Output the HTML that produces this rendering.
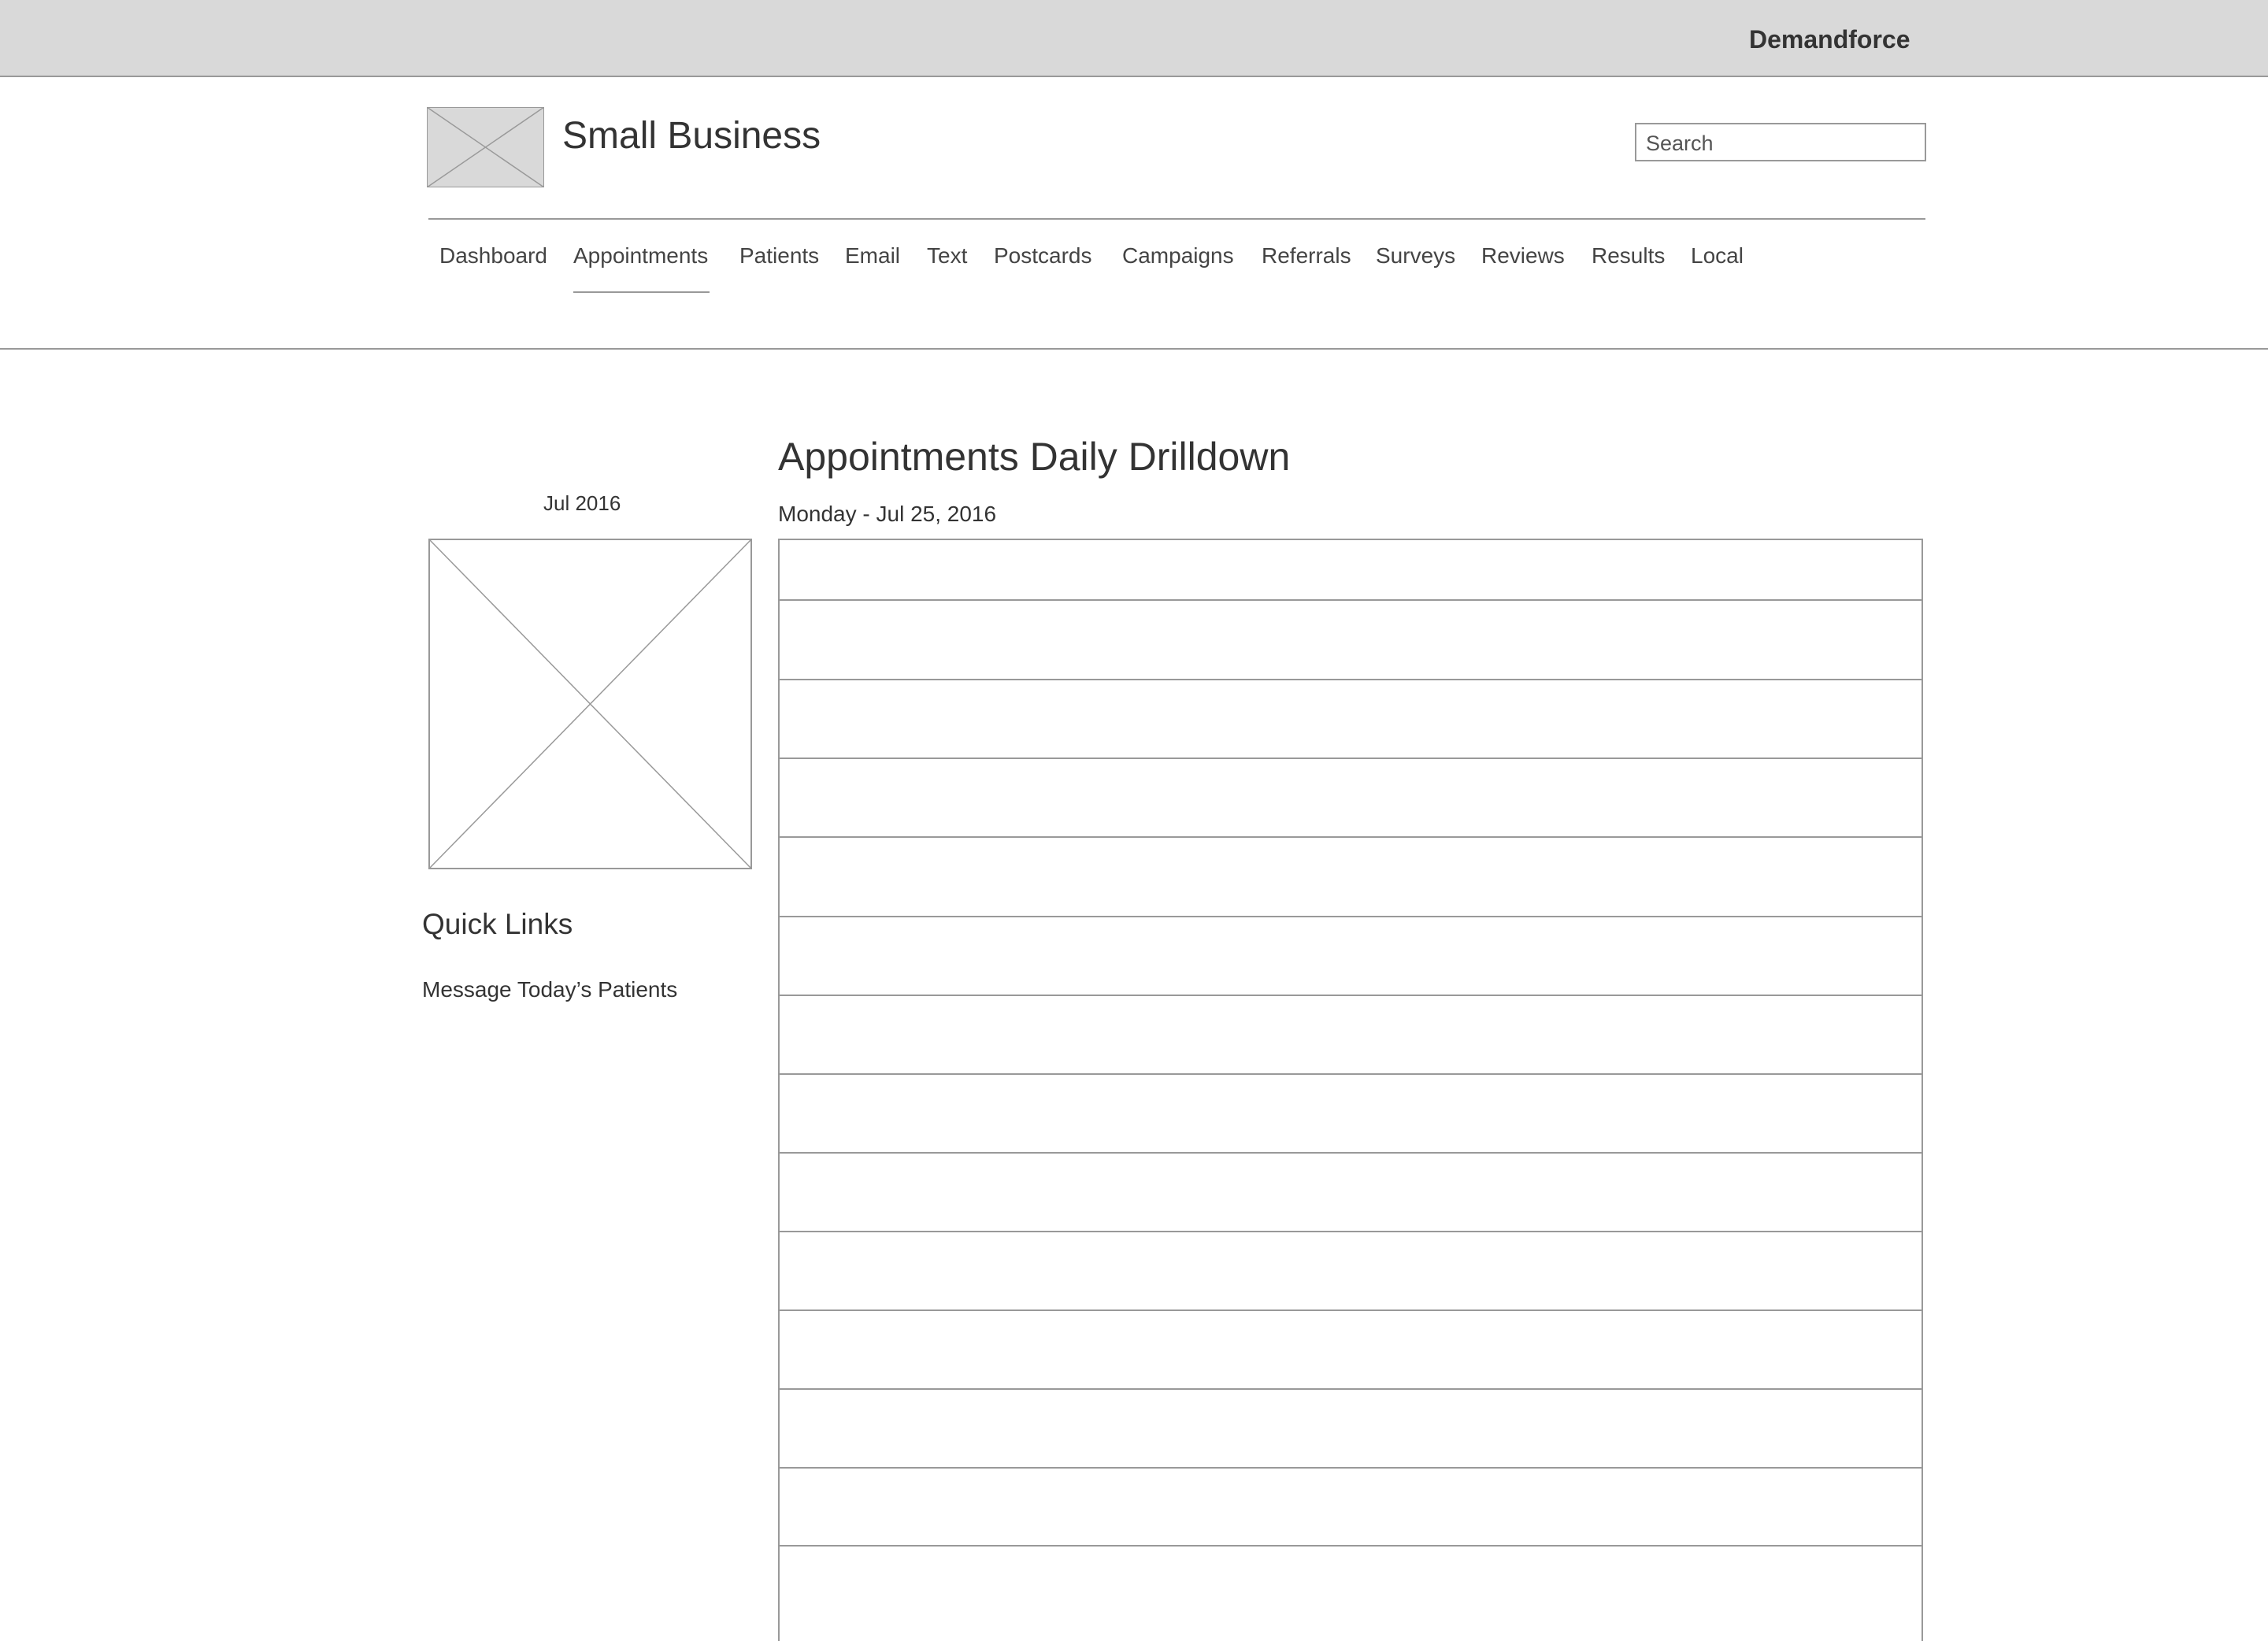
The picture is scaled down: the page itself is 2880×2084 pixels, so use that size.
<!DOCTYPE html>
<html><head><meta charset="utf-8"><style>
*{margin:0;padding:0;box-sizing:border-box}
body{width:2880px;height:2048px;overflow:hidden;background:#fff;font-family:"Liberation Sans",Arial,sans-serif;color:#333;position:relative}
.a{position:absolute;white-space:nowrap}
.hl{position:absolute;height:2px;background:#999}
.nav{position:absolute;top:309px;font-size:28px;color:#444}
.row{position:absolute;left:988px;width:1453px;height:2px;background:#999}
</style></head><body>
<div class="a" style="left:0;top:0;width:2880px;height:96px;background:#d9d9d9"></div>
<div class="hl" style="left:0;top:96px;width:2880px"></div>
<div class="a" style="left:2221px;top:32px;font-size:32px;font-weight:bold;color:#333">Demandforce</div>

<svg class="a" style="left:542px;top:136px" width="149" height="102"><rect x="0.5" y="0.5" width="148" height="101" fill="#d9d9d9" stroke="#999"/><line x1="0" y1="0" x2="149" y2="102" stroke="#999" stroke-width="1.5"/><line x1="149" y1="0" x2="0" y2="102" stroke="#999" stroke-width="1.5"/></svg>
<div class="a" style="left:714px;top:145px;font-size:48px;color:#333">Small Business</div>
<div class="a" style="left:2076px;top:156px;width:370px;height:49px;border:2px solid #999;font-size:27px;color:#555;padding:9px 0 0 12px">Search</div>

<div class="hl" style="left:544px;top:277px;width:1901px"></div>
<div class="nav" style="left:558px">Dashboard</div>
<div class="nav" style="left:728px">Appointments</div>
<div class="nav" style="left:939px">Patients</div>
<div class="nav" style="left:1073px">Email</div>
<div class="nav" style="left:1177px">Text</div>
<div class="nav" style="left:1262px">Postcards</div>
<div class="nav" style="left:1425px">Campaigns</div>
<div class="nav" style="left:1602px">Referrals</div>
<div class="nav" style="left:1747px">Surveys</div>
<div class="nav" style="left:1881px">Reviews</div>
<div class="nav" style="left:2021px">Results</div>
<div class="nav" style="left:2147px">Local</div>
<div class="hl" style="left:728px;top:370px;width:173px"></div>
<div class="hl" style="left:0;top:442px;width:2880px"></div>

<div class="a" style="left:988px;top:551px;font-size:50px;color:#333">Appointments Daily Drilldown</div>
<div class="a" style="left:988px;top:637px;font-size:28px">Monday - Jul 25, 2016</div>
<div class="a" style="left:690px;top:624px;font-size:26px">Jul 2016</div>
<svg class="a" style="left:544px;top:684px" width="411" height="420"><rect x="1" y="1" width="409" height="418" fill="#fff" stroke="#999" stroke-width="2"/><line x1="1" y1="1" x2="410" y2="419" stroke="#999" stroke-width="1.5"/><line x1="410" y1="1" x2="1" y2="419" stroke="#999" stroke-width="1.5"/></svg>
<div class="a" style="left:536px;top:1153px;font-size:37px">Quick Links</div>
<div class="a" style="left:536px;top:1241px;font-size:28px">Message Today’s Patients</div>

<div class="a" style="left:988px;top:684px;width:1454px;height:1400px;border:2px solid #999;border-bottom:none"></div>
<div class="row" style="top:761px"></div>
<div class="row" style="top:862px"></div>
<div class="row" style="top:962px"></div>
<div class="row" style="top:1062px"></div>
<div class="row" style="top:1163px"></div>
<div class="row" style="top:1263px"></div>
<div class="row" style="top:1363px"></div>
<div class="row" style="top:1463px"></div>
<div class="row" style="top:1563px"></div>
<div class="row" style="top:1663px"></div>
<div class="row" style="top:1763px"></div>
<div class="row" style="top:1863px"></div>
<div class="row" style="top:1962px"></div>
</body></html>
